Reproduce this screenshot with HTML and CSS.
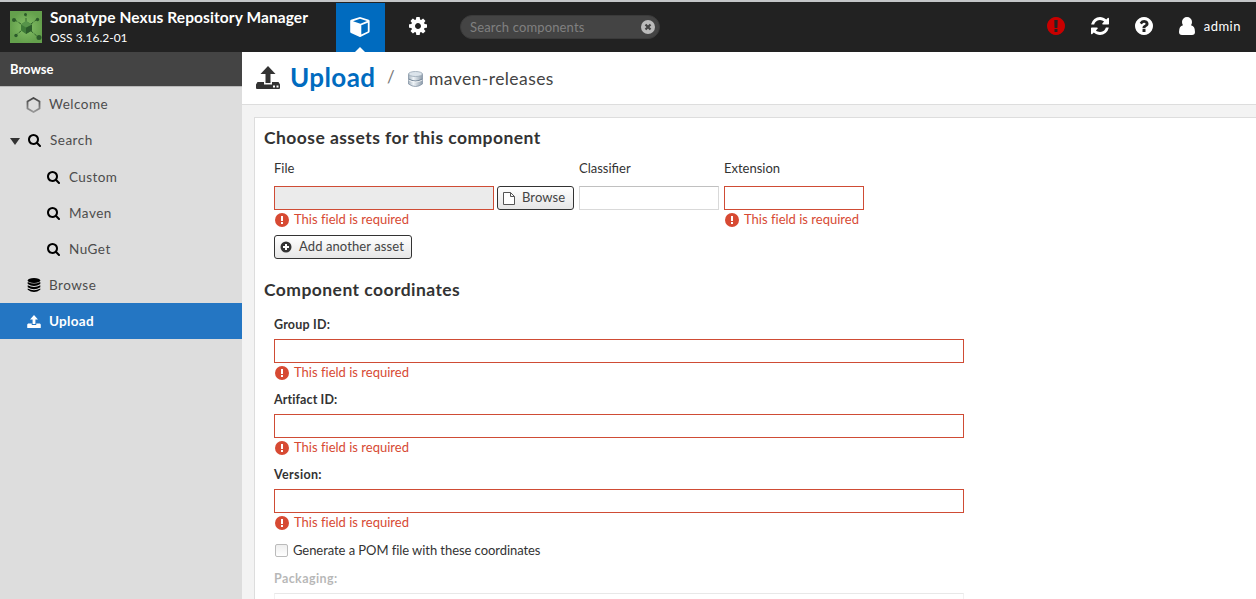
FILE: index.html
```html
<!DOCTYPE html>
<html lang="en">
<head>
<meta charset="utf-8">
<title>Sonatype Nexus Repository Manager</title>
<link rel="stylesheet" href="styles.css">
</head>
<body>
<svg class="defs" width="0" height="0" aria-hidden="true">
  <defs>
    <symbol id="alert" viewBox="128 128 1536 1536"><path d="M896 128q209 0 385.5 103t279.5 279.5 103 385.5-103 385.5-279.5 279.5-385.5 103-385.5-103-279.5-279.5-103-385.5 103-385.5 279.5-279.5 385.5-103zm128 1247v-190q0-14-9-23.5t-22-9.5h-192q-13 0-23 10t-10 23v190q0 13 10 23t23 10h192q13 0 22-9.5t9-23.5zm-2-344l18-621q0-12-10-18-10-8-24-8h-220q-14 0-24 8-10 6-10 18l17 621q0 10 10 17.5t24 7.5h185q14 0 23.5-7.5t10.5-17.5z"/></symbol>
    <symbol id="search" viewBox="64 128 1664 1664"><path d="M1216 832q0-185-131.5-316.5t-316.5-131.5-316.5 131.5-131.5 316.5 131.5 316.5 316.5 131.5 316.5-131.5 131.5-316.5zm512 832q0 52-38 90t-90 38q-54 0-90-38l-343-342q-179 124-399 124-143 0-273.5-55.5t-225-150-150-225-55.5-273.5 55.5-273.5 150-225 225-150 273.5-55.5 273.5 55.5 225 150 150 225 55.5 273.5q0 220-124 399l343 343q37 37 37 90z"/></symbol>
    <symbol id="upload" viewBox="0 0 24 23"><path d="M12 0l7 8h-4.500v8h-5V8H5zM1.500 15H8v2.500h8V15h6.500L24 17v5q0 1-1 1H1q-1 0-1-1v-5z"/></symbol>
    <symbol id="required" viewBox="0 0 14 14"><circle cx="7" cy="7" r="7" fill="#d74a33"/><path d="M6 3h2v5H6zM6 9h2v2H6z" fill="#fff"/></symbol>
    <linearGradient id="metal"><stop offset="0" stop-color="#a9b5c0"/><stop offset=".35" stop-color="#eef3f7"/><stop offset="1" stop-color="#8f9dab"/></linearGradient>
    <linearGradient id="hex" x2="0" y2="1"><stop offset="0" stop-color="#444"/><stop offset="1" stop-color="#999"/></linearGradient>
    <radialGradient id="leaf"><stop offset="0" stop-color="#86c168"/><stop offset="1" stop-color="#64a04c"/></radialGradient>
  </defs>
</svg>

<header class="topbar">
  <svg class="logo" width="32" height="32" viewBox="0 0 32 32">
    <path fill="url(#leaf)" d="M0 0h32v32H0z"/>
    <path d="M16 10V5M11 13L5 9M21 13l5-4M11 20l-5 4M21 20l7 6" fill="none" stroke="#31652d" stroke-dasharray="3 1.500"/>
    <g fill="#2c5b2a"><circle cx="15.500" cy="3.500" r="1.500"/><circle cx="4" cy="9" r="2"/><circle cx="27.500" cy="8.500" r="1.700"/><circle cx="6" cy="24.500" r="1.700"/><circle cx="29" cy="26.500" r="2.500"/></g>
    <path fill="#3f7c38" d="M16 10l6 3.500v6L16 23l-5-3.500v-6z"/><path fill="#2c5c2b" d="M16 16.500l6-3v6L16 23z"/><path fill="#57944a" d="M16 10l6 3.500-6 3-5-3z"/>
  </svg>
  <div class="product"><div class="product-name">Sonatype Nexus Repository Manager</div><div class="product-version">OSS 3.16.2-01</div></div>
  <div class="mode active">
    <svg width="20" height="20" viewBox="0 0 20 20"><path fill="#fff" d="M10 0l8.700 2.700q.9.300.9 1.300v10.500q0 .9-.8 1.300L10.800 19.700q-.8.400-1.500 0L1 16.100q-.8-.4-.8-1.300V4q0-1 .8-1.300z"/><path fill="#006bbf" d="M10 1.800l7 2.300L10.500 6.700 3 4.300zM11.300 8.300l6.500-2.600v8.700l-6.500 3z"/></svg>
  </div>
  <div class="mode">
    <svg width="18" height="18" viewBox="128 128 1536 1536"><path fill="#fff" d="M1152 896q0-106-75-181t-181-75-181 75-75 181 75 181 181 75 181-75 75-181zm512-109v222q0 12-8 23t-20 13l-185 28q-19 54-39 91 35 50 107 138 10 12 10 25t-9 23q-27 37-99 108t-94 71q-12 0-26-9l-138-108q-44 23-91 38-16 136-29 186-7 28-36 28h-222q-14 0-24.500-8.500t-11.500-21.500l-28-184q-49-16-90-37l-141 107q-10 9-25 9-14 0-25-11-126-114-165-168-7-10-7-23 0-12 8-23 15-21 51-66.500t54-70.500q-27-50-41-99l-183-27q-13-2-21-12.500t-8-23.500v-222q0-12 8-23t19-13l186-28q14-46 39-92-40-57-107-138-10-12-10-24 0-10 9-23 26-36 98.500-107.500t94.500-71.500q13 0 26 10l138 107q44-23 91-38 16-136 29-186 7-28 36-28h222q14 0 24.500 8.500t11.500 21.500l28 184q49 16 90 37l142-107q9-9 24-9 13 0 25 10 129 119 165 170 7 8 7 22 0 12-8 23-15 21-51 66.500t-54 70.500q26 50 41 98l183 28q13 2 21 12.500t8 23.500z"/></svg>
  </div>
  <div class="quick-search"><span>Search components</span>
    <svg width="14" height="14" viewBox="0 0 14 14"><circle cx="7" cy="7" r="7" fill="#bbb"/><path d="M4.500 4.500l5 5M9.500 4.500l-5 5" stroke="#444" stroke-width="2.200"/></svg>
  </div>
  <div class="tools">
    <svg class="health" width="18" height="18"><use href="#alert"/></svg>
    <svg width="18" height="18" viewBox="128 128 1536 1536"><path d="M1639 1056q0 5-1 7-64 268-268 434.500t-478 166.500q-146 0-282.500-55t-243.500-157l-129 129q-19 19-45 19t-45-19-19-45v-448q0-26 19-45t45-19h448q26 0 45 19t19 45-19 45l-137 137q71 66 161 102t187 36q134 0 250-65t186-179q11-17 53-117 8-23 30-23h192q13 0 22.500 9.500t9.500 22.500zm25-800v448q0 26-19 45t-45 19h-448q-26 0-45-19t-19-45 19-45l138-138q-148-137-349-137-134 0-250 65t-186 179q-11 17-53 117-8 23-30 23h-199q-13 0-22.500-9.500t-9.500-22.500v-7q65-268 270-434.500t480-166.500q146 0 284 55.500t245 156.500l130-129q19-19 45-19t45 19 19 45z"/></svg>
    <svg width="18" height="18" viewBox="128 128 1536 1536"><path d="M1024 1376v-192q0-14-9-23t-23-9h-192q-14 0-23 9t-9 23v192q0 14 9 23t23 9h192q14 0 23-9t9-23zm256-672q0-88-55.500-163t-138.500-116-170-41q-243 0-371 213-15 24 8 42l132 100q7 6 19 6 16 0 25-12 53-68 86-92 34-24 86-24 48 0 85.500 26t37.500 59q0 38-20 61t-68 45q-63 28-115.500 86.500t-52.500 125.500v36q0 14 9 23t23 9h192q14 0 23-9t9-23q0-19 21.500-49.500t54.500-49.500q32-18 49-28.500t46-35 44.500-48 28-60.500 12.500-81zm384 192q0 209-103 385.500t-279.500 279.500-385.500 103-385.500-103-279.500-279.500-103-385.500 103-385.500 279.500-279.500 385.500-103 385.500 103 279.500 279.500 103 385.500z"/></svg>
    <div class="user"><svg width="16" height="18" viewBox="0 0 16 18"><path d="M8 0a5 5 0 0 1 5 5q0 2-1 3.300Q16 9 16 15q0 3-3 3H3q-3 0-3-3 0-6 4-6.700Q3 7 3 5a5 5 0 0 1 5-5z"/></svg><span>admin</span></div>
  </div>
</header>

<div class="body">
  <nav class="sidebar">
    <div class="sidebar-title">Browse</div>
    <ul class="tree">
      <li class="welcome"><svg width="15" height="16" viewBox="0 0 15 16"><path d="M7.500 1l6 3.400v7.200L7.500 15l-6-3.400V4.400z" fill="none" stroke="url(#hex)" stroke-width="1.800"/></svg><span>Welcome</span></li>
      <li class="search-node"><svg class="arrow" width="10" height="7"><path d="M0 0h10L5 7z" fill="#333"/></svg><svg class="glass" width="13" height="13"><use href="#search"/></svg><span>Search</span></li>
      <li class="child"><svg class="glass" width="13" height="13"><use href="#search"/></svg><span class="custom">Custom</span></li>
      <li class="child"><svg class="glass" width="13" height="13"><use href="#search"/></svg><span>Maven</span></li>
      <li class="child"><svg class="glass" width="13" height="13"><use href="#search"/></svg><span>NuGet</span></li>
      <li><svg width="14" height="14" viewBox="0 0 14 14"><ellipse cx="7" cy="2.500" rx="6.300" ry="2.500"/><path d="M.7 4q6.300 3 12.600 0v2q-6.300 4-12.600 0zM.7 7.300q6.300 3.500 12.600 0v1.900q-6.300 4-12.600 0zM.7 10.600q6.300 3.500 12.600 0v1.200q-6.300 4.400-12.600 0z"/></svg><span>Browse</span></li>
      <li class="selected"><svg width="14" height="13"><use href="#upload"/></svg><span>Upload</span></li>
    </ul>
  </nav>

  <main class="content">
    <div class="crumbs">
      <svg class="crumb-upload" width="24" height="23" viewBox="0 0 24 23"><path fill="#333" d="M12 0l7.500 8h-5v9h-5V8h-5z"/><path fill="#333" d="M1.500 16H8v2.500h8V16h6.500L24 18.500V22q0 1-1 1H1q-1 0-1-1v-3.500z"/><path fill="#fff" d="M17 19.500h2v2h-2zM20.500 19.500h2v2h-2z"/></svg>
      <h1>Upload</h1><span class="slash">/</span>
      <svg class="crumb-db" width="15" height="16" viewBox="0 0 14 16" preserveAspectRatio="none"><path d="M.5 3v10q6.500 5 13 0V3z" fill="url(#metal)" stroke="#8595a5" stroke-width=".8"/><ellipse cx="7" cy="3" rx="6.500" ry="2.500" fill="#dce4eb" stroke="#9ba9b6" stroke-width=".8"/><path d="M.5 8q6.500 4 13 0" fill="none" stroke="#77899a"/><path d="M.5 9q6.500 4 13 0" fill="none" stroke="#fff" stroke-width=".7"/></svg>
      <span class="repo">maven-releases</span>
    </div>
    <section class="panel">
      <h2 class="choose">Choose assets for this component</h2>
      <div class="assets">
        <div class="asset file"><label>File</label><div class="file-row"><div class="input invalid disabled"></div><div class="button browse"><svg width="12" height="13" viewBox="0 0 12 13"><path d="M.5.5h7l4 4v8H.5zM7.500.5v4h4" fill="#fff" stroke="#555"/></svg><span>Browse</span></div></div><div class="error"><svg width="14" height="14"><use href="#required"/></svg><span>This field is required</span></div></div>
        <div class="asset"><label class="classifier">Classifier</label><div class="input"></div></div>
        <div class="asset"><label>Extension</label><div class="input invalid"></div><div class="error"><svg width="14" height="14"><use href="#required"/></svg><span>This field is required</span></div></div>
      </div>
      <div class="button add"><svg width="12" height="12" viewBox="0 0 12 12"><circle cx="6" cy="6" r="5.500" fill="#333"/><path d="M6 3v6M3 6h6" stroke="#fff" stroke-width="2"/></svg><span>Add another asset</span></div>
      <h2 class="coords">Component coordinates</h2>
      <div class="field"><label class="group">Group ID:</label><div class="input invalid"></div><div class="error"><svg width="14" height="14"><use href="#required"/></svg><span>This field is required</span></div></div>
      <div class="field"><label class="artifact">Artifact ID:</label><div class="input invalid"></div><div class="error"><svg width="14" height="14"><use href="#required"/></svg><span>This field is required</span></div></div>
      <div class="field"><label class="version">Version:</label><div class="input invalid"></div><div class="error"><svg width="14" height="14"><use href="#required"/></svg><span>This field is required</span></div></div>
      <div class="check"><i class="box"></i><span>Generate a POM file with these coordinates</span></div>
      <div class="field faded"><label class="packaging">Packaging:</label><div class="input"></div></div>
    </section>
  </main>
</div>
</body>
</html>
```

FILE: styles.css
```css
* { box-sizing: border-box; }
body { margin: 0; width: 1256px; height: 599px; overflow: hidden; background: #fff; color: #333; font: 13px/16px Lato, "Open Sans", sans-serif; }
svg { display: block; flex: none; }
.defs { position: absolute; }
span, label, h1, h2 { white-space: nowrap; }

.topbar { display: flex; height: 52px; border-top: 2px solid #c4c6c8; background: #222; color: #fff; }
.logo { margin: 9px 8px 0 10px; }
.product { width: 286px; padding-top: 5px; }
.product-name { font-size: 15.500px; font-weight: 700; line-height: 21px; white-space: nowrap; letter-spacing: .09px; }
.product-version { font-size: 12px; line-height: 19px; letter-spacing: 0; }
.mode { position: relative; width: 49px; padding: 15px 0 0 15px; }
.mode.active { margin-top: 1px; padding: 14px 0 0 14px; background: #006bbf; }
.mode.active::after { content: ""; position: absolute; left: 19px; bottom: 0; border: 5px solid transparent; border-top: 0; border-bottom-color: #fff; }
.mode + .mode { padding-left: 24px; }
.quick-search { display: flex; justify-content: space-between; align-items: center; width: 200px; height: 24px; margin: 13px 0 0 26px; padding: 0 4px 0 9px; border: 1px solid #3a3a3a; border-radius: 12px; background: #444; color: #808080; letter-spacing: .15px; }
.tools { display: flex; margin-left: auto; padding: 15px 15px 0 0; gap: 26px; fill: #fff; }
.health { fill: #c90000; }
.user { display: flex; gap: 9px; line-height: 19px; letter-spacing: .5px; }

.body { display: flex; height: 547px; }
.sidebar { width: 242px; background: #ddd; }
.sidebar-title { height: 35px; padding-left: 10px; border-bottom: 1px solid #b9b9b9; background: #444; color: #fff; font-weight: 700; font-size: 13px; line-height: 35px; }
.tree { margin: 0; padding: 0; list-style: none; color: #4c4c4c; fill: #000; }
.tree li { display: flex; align-items: center; height: 36px; padding-left: 27px; gap: 8px; letter-spacing: .5px; font-size: 13.500px; }
.tree li.welcome { height: 36px; gap: 7px; padding-left: 26px; }
.welcome span { padding: 0 0 2px 1px; }
.tree li.search-node { height: 36px; padding-left: 10px; padding-bottom: 2px; gap: 8px; }
.search-node span { padding-left: 1px; }
.search-node .arrow { margin-top: 2px; }
.tree li.child { padding-left: 47px; gap: 9px; }
.tree .custom { letter-spacing: .4px; }
.tree li.selected { background: #2476c3; color: #fff; fill: #fff; letter-spacing: .3px; font-weight: 700; }

.content { flex: 1; background: #f3f3f3; }
.crumbs { display: flex; height: 53px; padding-left: 14px; border-bottom: 1px solid #ddd; background: #fff; }
.crumb-upload { margin-top: 14px; }
h1 { margin: 9px 0 0 10px; color: #006bbf; font-size: 26px; line-height: 32px; letter-spacing: .4px; width: 85px; }
.slash { margin: 17px 0 0 12px; width: 8px; font-size: 17px; color: #777; }
.crumb-db { margin: 19px 0 0 13px; }
.repo { margin: 17px 0 0 6px; font-size: 17.500px; line-height: 20px; color: #444; letter-spacing: .42px; }
.panel { height: 482px; margin: 12px 0 0 12px; padding: 0 0 0 9px; border: 1px solid #ddd; border-right: 0; border-bottom: 0; background: #fff; overflow: hidden; }
h2 { margin: 0; font-size: 17.500px; line-height: 22px; letter-spacing: .44px; }
.choose { padding-top: 9px; }
.assets { display: flex; gap: 5px; padding: 11px 0 0 10px; height: 86px; }
.asset { width: 140px; }
.asset.file { width: 300px; }
.asset label { display: block; height: 26px; letter-spacing: 0; }
.input { height: 24px; border: 1px solid #d9d9d9; border-top-color: #c0c0c0; background: #fff; }
.input.invalid { border-color: #cf4c35; }
.input.disabled { width: 220px; background: #ebebeb; }
.file-row { display: flex; gap: 3px; }
.button { display: flex; align-items: center; height: 24px; border: 1px solid #333; border-radius: 3px; background: linear-gradient(#fff, #e6e6e6); color: #444; }
.browse { width: 77px; padding-left: 5px; gap: 7px; letter-spacing: .1px; }
.button span { padding-bottom: 2px; }
.error { display: flex; align-items: center; height: 20px; padding-left: 1px; gap: 5px; color: #d74a33; letter-spacing: .01px; }
.error span { padding-bottom: 2px; }
.add { width: 138px; margin: 0 0 0 10px; padding-left: 5px; gap: 7px; letter-spacing: .1px; }
.coords { margin-top: 20px; height: 38px; }
.field { width: 700px; height: 75px; padding-left: 10px; }
.field label { display: block; height: 22px; line-height: 16px; font-weight: 700; font-size: 12.500px; letter-spacing: .2px; }
.field .artifact { letter-spacing: .1px; }
.field .version { letter-spacing: .35px; }
.field .packaging { letter-spacing: .4px; }
.check { display: flex; align-items: center; height: 15px; margin-top: 1px; padding-left: 11px; gap: 5px; letter-spacing: -.06px; }
.check span { padding-bottom: 2px; }
.box { width: 13px; height: 13px; border: 1px solid #bbb; border-radius: 2px; background: linear-gradient(#eee, #fff); }
.faded { opacity: .35; padding-top: 13px; }
```
